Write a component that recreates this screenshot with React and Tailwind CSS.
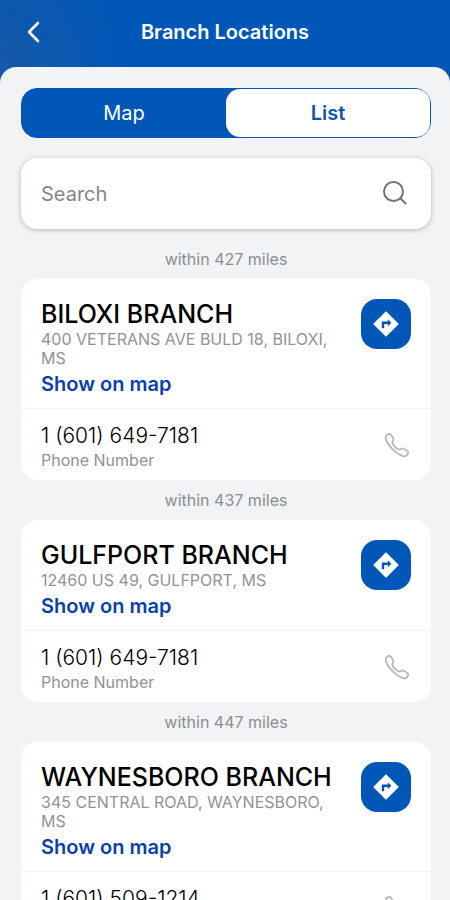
import { useState } from "react";
import { IoCallOutline } from "react-icons/io5";

const branches = [
  {
    name: "BILOXI BRANCH",
    address: "400 VETERANS AVE BULD 18, BILOXI, MS",
    phone: "1 (601) 649-7181",
    miles: 427,
  },
  {
    name: "GULFPORT BRANCH",
    address: "12460 US 49, GULFPORT, MS",
    phone: "1 (601) 649-7181",
    miles: 437,
  },
  {
    name: "WAYNESBORO BRANCH",
    address: "345 CENTRAL ROAD, WAYNESBORO, MS",
    phone: "1 (601) 509-1214",
    miles: 447,
  },
];

const DirectionsIcon = () => (
  <svg width="26" height="26" viewBox="0 0 26 26" aria-hidden="true">
    <path
      d="M13 1.2 24.8 13 13 24.8 1.2 13Z"
      fill="#fff"
      stroke="#fff"
      strokeWidth="1.6"
      strokeLinejoin="round"
    />
    <path d="M10 17.2v-5.4h6" fill="none" stroke="#0057b8" strokeWidth="2.4" />
    <path d="M14.8 8.2 18.4 11.8 14.8 15.2Z" fill="#0057b8" />
  </svg>
);

function BranchCard({ branch }) {
  return (
    <li>
      <p className="h-10 pb-px flex items-center justify-center text-base text-[#8c8e90]">
        within {branch.miles} miles
      </p>
      <article className="bg-white rounded-2xl">
        <div className="flex items-start justify-between gap-4 p-5 pb-3">
          <div>
            <h2 className="text-[25px] leading-[31px] font-medium text-black">{branch.name}</h2>
            <p className="text-base leading-[19px] text-[#929292]">{branch.address}</p>
            <a href="#map" className="block mt-1 text-xl leading-6 font-semibold text-[#0b3fac]">
              Show on map
            </a>
          </div>
          <button
            type="button"
            aria-label={`Directions to ${branch.name}`}
            className="size-[50px] shrink-0 rounded-2xl bg-[#0057b8] flex items-center justify-center"
          >
            <DirectionsIcon />
          </button>
        </div>
        <div className="flex items-center justify-between border-t border-[#f0f1f2] px-5 pt-[15px] pb-2">
          <div>
            <p className="text-[21px] leading-6 font-light text-black">{branch.phone}</p>
            <p className="text-base leading-6 text-[#929292]">Phone Number</p>
          </div>
          <button type="button" aria-label={`Call ${branch.name}`} className="pb-1.5">
            <IoCallOutline size={28} className="text-[#b4b6b8]" />
          </button>
        </div>
      </article>
    </li>
  );
}

export default function App() {
  const [view, setView] = useState("list"); // map | list
  const [search, setSearch] = useState("");

  const visible = branches.filter((b) =>
    `${b.name} ${b.address}`.toLowerCase().includes(search.trim().toLowerCase())
  );

  const tabClass = (name) =>
    view === name
      ? "flex-1 rounded-[14px] bg-white text-xl font-semibold text-[#1554ae]"
      : "flex-1 rounded-[14px] text-xl text-white";

  return (
    <div className="h-screen flex flex-col overflow-hidden font-['Inter',sans-serif] bg-[#0057b8] bg-[radial-gradient(circle_at_0px_60px,#1659a8,#0057b8_130px)]">
      {/* Header */}
      <header className="h-[67px] shrink-0 grid grid-cols-[48px_1fr_48px] items-center pb-1">
        <button type="button" aria-label="Back" className="flex justify-end pr-2">
          <svg width="14" height="22" viewBox="0 0 14 22" fill="none" stroke="#fff"
            strokeWidth="2.6" strokeLinecap="round" strokeLinejoin="round" aria-hidden="true">
            <path d="M12 2 3 11l9 9" />
          </svg>
        </button>
        <h1 className="text-center text-xl font-semibold text-white">Branch Locations</h1>
      </header>

      <main className="flex-1 overflow-y-auto [scrollbar-width:none] rounded-t-2xl bg-[#f1f3f5] pl-[21px] pr-[19px] pt-[21px]">
        {/* Map / list toggle */}
        <div className="h-[50px] flex rounded-2xl border border-[#0057b8] bg-[#0057b8]">
          <button type="button" className={tabClass("map")} onClick={() => setView("map")}>
            Map
          </button>
          <button type="button" className={tabClass("list")} onClick={() => setView("list")}>
            List
          </button>
        </div>

        {/* Search */}
        <label className="mt-5 h-[71px] flex items-center rounded-2xl bg-white px-5 shadow-[0_1px_5px_rgba(0,0,0,0.25)]">
          <input
            value={search}
            onChange={(e) => setSearch(e.target.value)}
            placeholder="Search"
            aria-label="Search branches"
            className="min-w-0 flex-1 bg-transparent text-xl text-black outline-none placeholder:text-[#868686]"
          />
          <svg width="28" height="28" viewBox="0 0 28 28" fill="none" stroke="#737373"
            strokeWidth="2" aria-hidden="true">
            <circle cx="10.500" cy="11.500" r="9.500" />
            <path d="m17.300 18.300 6 5.800" />
          </svg>
        </label>

        <ul className="pt-[10px] pb-5">
          {visible.map((b) => <BranchCard key={b.name} branch={b} />)}
        </ul>
      </main>
    </div>
  );
}
